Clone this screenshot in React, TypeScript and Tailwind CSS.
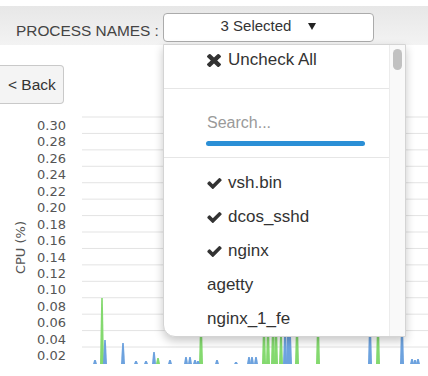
import React from "react";

const sans = "font-['Liberation_Sans',Arial,sans-serif]";

// spikes of the CPU chart: [x on page, top y on page]
const blueSpikes: [number, number][] = [
  [95, 360], [105, 340], [123, 343], [136, 361], [146, 361], [154, 352],
  [170, 360], [186, 357], [190, 357], [195, 360], [198, 361], [217, 360],
  [236, 362], [249, 357], [252, 357], [256, 357], [285, 330], [288, 320],
  [290, 330], [370, 320], [402, 320], [412, 359], [415, 360], [418, 359],
];
const greenSpikes: [number, number][] = [
  [102, 298], [158, 358], [201, 320], [264, 320], [268, 320], [273, 320],
  [276, 320], [281, 330], [297, 320], [318, 320], [378, 320],
];

const labels = [
  "0.30", "0.28", "0.26", "0.24", "0.22", "0.20", "0.18", "0.16",
  "0.14", "0.12", "0.10", "0.08", "0.06", "0.04", "0.02",
];

const items = [
  { name: "vsh.bin", checked: true },
  { name: "dcos_sshd", checked: true },
  { name: "nginx", checked: true },
  { name: "agetty", checked: false },
  { name: "nginx_1_fe", checked: false },
];

function CheckIcon() {
  return (
    <svg width="15" height="11" viewBox="121 334 1550 1188" fill="#333">
      <path d="M1671 566q0 40-28 68l-724 724-136 136q-28 28-68 28t-68-28l-136-136-362-362q-28-28-28-68t28-68l136-136q28-28 68-28t68 28l294 295 656-657q28-28 68-28t68 28l136 136q28 28 28 68z" />
    </svg>
  );
}

function TimesIcon() {
  return (
    <svg width="14" height="13" viewBox="110 366 1188 1188" preserveAspectRatio="none" fill="#333">
      <path d="M1298 1322q0 40-28 68l-136 136q-28 28-68 28t-68-28l-294-294-294 294q-28 28-68 28t-68-28l-136-136q-28-28-28-68t28-68l294-294-294-294q-28-28-28-68t28-68l136-136q28-28 68-28t68 28l294 294 294-294q28-28 68-28t68 28l136 136q28 28 28 68t-28 68l-294 294 294 294q28 28 28 68z" />
    </svg>
  );
}

function Chart() {
  const base = 260;
  const spike = (x: number, top: number, color: string, key: string) => {
    const lx = x - 82;
    const ty = top - 104;
    return (
      <polygon
        key={key}
        points={`${lx - 2},${base} ${lx - 0.8},${ty} ${lx + 0.8},${ty} ${lx + 2},${base}`}
        fill={color}
      />
    );
  };
  return (
    <svg width="346" height="272" className="block">
      {labels.map((l, i) => (
        <line key={l} x1="0" x2="346" y1={13 + i * 16.43} y2={13 + i * 16.43} stroke="#e3e3e3" strokeWidth="1" />
      ))}
      {greenSpikes.map(([x, t], i) => spike(x, t, "#84d96f", "g" + i))}
      {blueSpikes.map(([x, t], i) => spike(x, t, "#6da2de", "b" + i))}
    </svg>
  );
}

export default function App() {
  return (
    <div className={`relative w-[428px] h-[376px] overflow-hidden bg-white ${sans}`}>
      {/* header bar */}
      <div className="mt-[6px] h-[39px] flex items-start bg-gradient-to-b from-[#e7e7e7] to-[#f3f3f3]">
        <div className="w-[163px] pl-[16px] pt-[15px] text-[15.4px] leading-[20px] text-[#444] whitespace-nowrap">
          PROCESS NAMES :
        </div>
        <div className="mt-[7px] w-[211px] h-[29px] bg-white border border-[#ababab] rounded-[4px] flex justify-center pt-[2px]">
          <span className="text-[15px] leading-[20px] text-[#333]">3 Selected</span>
          <svg width="8" height="7" viewBox="0 0 8 7" className="ml-[17px] mt-[7px]">
            <polygon points="0,0 8,0 4,7" fill="#222" />
          </svg>
        </div>
      </div>

      {/* back button */}
      <div className="mt-[20px] w-[64px] h-[39px] bg-[#f4f4f4] border border-l-0 border-[#c9c9c9] rounded-r-[4px] flex items-center pl-[8px] text-[15.5px] text-[#333]">
        &lt; Back
      </div>

      {/* chart */}
      <div className="flex h-[272px]">
        <div className="w-[28px] flex justify-end items-center pt-[16px]">
          <span className="[writing-mode:vertical-rl] rotate-180 leading-[14px] text-[13px] text-[#555] font-['DejaVu_Sans',sans-serif] whitespace-nowrap">
            CPU (%)
          </span>
        </div>
        <div className="w-[38px] pt-[14px] text-right font-['DejaVu_Sans',sans-serif] text-[13px] leading-[16.43px] text-[#555]">
          {labels.map((l) => (
            <div key={l}>{l}</div>
          ))}
        </div>
        <div className="ml-[16px]">
          <Chart />
        </div>
      </div>

      {/* dropdown menu */}
      <div className="absolute left-[163px] top-[44px] w-[243px] h-[293px] bg-white border border-[#d4d4d4] rounded-bl-[12px] shadow-[0_4px_10px_rgba(0,0,0,0.22)] flex overflow-hidden text-[#333]">
        <div className="flex-1">
          <div className="h-[44px] border-b border-[#e6e6e6] pt-[5px] pl-[43px] flex items-start">
            <div className="h-[20px] flex items-center">
              <TimesIcon />
              <span className="ml-[7px] text-[17px] leading-[20px]">Uncheck All</span>
            </div>
          </div>
          <div className="h-[69px] border-b border-[#e6e6e6] pt-[22px]">
            <input
              placeholder="Search..."
              className="ml-[43px] w-[150px] h-[20px] text-[16px] leading-[20px] bg-transparent outline-none placeholder:text-[#9a9a9a]"
            />
            <div className="ml-[42px] mt-[6px] w-[159px] h-[5px] rounded-full bg-[#2b8fd6]" />
          </div>
          <div className="pt-[8px] pl-[43px]">
            {items.map((it) => (
              <div key={it.name} className="h-[34px] flex items-center">
                {it.checked && (
                  <span className="mr-[6px] flex">
                    <CheckIcon />
                  </span>
                )}
                <span className="text-[17px] leading-[20px]">{it.name}</span>
              </div>
            ))}
          </div>
        </div>
        <div className="w-[16px] bg-[#f9f9f9] border-l border-[#ececec] pt-[4px] flex justify-center">
          <div className="w-[9px] h-[21px] rounded-full bg-[#c1c1c1]" />
        </div>
      </div>
    </div>
  );
}
